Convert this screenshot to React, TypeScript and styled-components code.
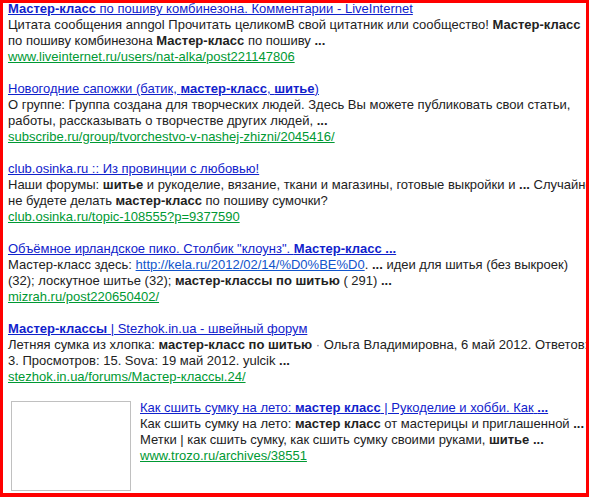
import React from "react";
import styled, { createGlobalStyle } from "styled-components";

const GlobalStyle = createGlobalStyle`
  html, body {
    margin: 0;
    padding: 0;
    background: #fff;
  }
  body {
    font-family: "Liberation Sans", Arial, sans-serif;
    font-size: 13px;
    color: #222;
  }
`;

const Frame = styled.div`
  position: relative;
  width: 589px;
  height: 497px;
  overflow: hidden;
  background: #fff;
`;

const RedMark = styled.div`
  position: absolute;
  inset: 0;
  border: 3px solid #ff0000;
  border-bottom-width: 4px;
  pointer-events: none;
`;

const Results = styled.div`
  width: 585px;
  padding: 1px 0 0 8px;
  display: flex;
  flex-direction: column;
  gap: 16px;
`;

const Result = styled.div<{ $media: boolean }>`
  display: flex;
  align-items: flex-start;
  line-height: 16px;
  margin-top: ${(p) => (p.$media ? "-3px" : "0")};
`;

const Body = styled.div<{ $media: boolean }>`
  flex: 1;
  min-width: 0;
  padding-top: ${(p) => (p.$media ? "2px" : "0")};
`;

const Thumb = styled.div`
  flex: none;
  width: 118px;
  height: 88px;
  margin: 3px 9px 0 3px;
  border: 1px solid #c0c0c0;
  background: #fff;
`;

const Title = styled.a`
  display: block;
  color: #1122cc;
  text-decoration: underline;
  white-space: nowrap;
`;

const Snippet = styled.div`
  color: #222;
`;

const InlineLink = styled.a`
  color: #1155cc;
  text-decoration: underline;
`;

const Dot = styled.span`
  color: #777;
`;

const Url = styled.a`
  display: block;
  color: #009933;
  text-decoration: underline;
`;

type Hit = {
  title: React.ReactNode;
  snippet: React.ReactNode;
  url: string;
  thumb?: boolean;
};

const hits: Hit[] = [
  {
    title: (
      <>
        <b>Мастер-класс</b> по пошиву комбинезона. Комментарии - LiveInternet
      </>
    ),
    snippet: (
      <>
        Цитата сообщения anngol Прочитать целикомВ свой цитатник или сообщество!{" "}
        <b>Мастер-класс</b> по пошиву комбинезона <b>Мастер-класс</b> по пошиву{" "}
        <b>...</b>
      </>
    ),
    url: "www.liveinternet.ru/users/nat-alka/post221147806",
  },
  {
    title: (
      <>
        Новогодние сапожки (батик, <b>мастер-класс</b>, <b>шитье</b>)
      </>
    ),
    snippet: (
      <>
        О группе: Группа создана для творческих людей. Здесь Вы можете
        публиковать свои статьи, работы, рассказывать о творчестве других
        людей, <b>...</b>
      </>
    ),
    url: "subscribe.ru/group/tvorchestvo-v-nashej-zhizni/2045416/",
  },
  {
    title: <>club.osinka.ru :: Из провинции с любовью!</>,
    snippet: (
      <>
        Наши форумы: <b>шитье</b> и рукоделие, вязание, ткани и магазины,
        готовые выкройки и <b>...</b> Случайно не будете делать{" "}
        <b>мастер-класс</b> по пошиву сумочки?
      </>
    ),
    url: "club.osinka.ru/topic-108555?p=9377590",
  },
  {
    title: (
      <>
        Объёмное ирландское пико. Столбик "клоунз". <b>Мастер-класс ...</b>
      </>
    ),
    snippet: (
      <>
        Мастер-класс здесь:{" "}
        <InlineLink href="#">http://kela.ru/2012/02/14/%D0%BE%D0</InlineLink>.{" "}
        <b>...</b> идеи для шитья (без выкроек) (32); лоскутное шитье (32);{" "}
        <b>мастер-классы по шитью</b> ( 291) <b>...</b>
      </>
    ),
    url: "mizrah.ru/post220650402/",
  },
  {
    title: (
      <>
        <b>Мастер-классы</b> | Stezhok.in.ua - швейный форум
      </>
    ),
    snippet: (
      <>
        Летняя сумка из хлопка: <b>мастер-класс по шитью</b> <Dot>·</Dot> Ольга
        Владимировна, 6 май 2012. Ответов: 3. Просмотров: 15. Sova: 19 май
        2012. yulcik <b>...</b>
      </>
    ),
    url: "stezhok.in.ua/forums/Мастер-классы.24/",
  },
  {
    title: (
      <>
        Как сшить сумку на лето: <b>мастер класс</b> | Рукоделие и хобби. Как{" "}
        <b>...</b>
      </>
    ),
    snippet: (
      <>
        Как сшить сумку на лето: <b>мастер класс</b> от мастерицы и
        приглашенной <b>...</b> Метки | как сшить сумку, как сшить сумку
        своими руками, <b>шитье ...</b>
      </>
    ),
    url: "www.trozo.ru/archives/38551",
    thumb: true,
  },
];

export default function App() {
  return (
    <>
      <GlobalStyle />
      <Frame>
        <Results>
          {hits.map((h, i) => (
            <Result key={i} $media={!!h.thumb}>
              {h.thumb && <Thumb />}
              <Body $media={!!h.thumb}>
                <Title href="#">{h.title}</Title>
                <Snippet>{h.snippet}</Snippet>
                <Url href="#">{h.url}</Url>
              </Body>
            </Result>
          ))}
        </Results>
        <RedMark />
      </Frame>
    </>
  );
}
